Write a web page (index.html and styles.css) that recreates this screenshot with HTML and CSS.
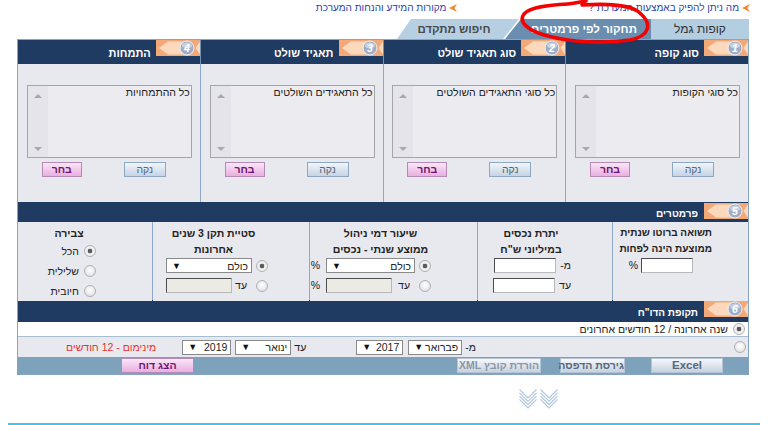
FILE: index.html
```html
<!DOCTYPE html>
<html lang="he" dir="rtl">
<head>
<meta charset="utf-8">
<title>תחקור לפי פרמטרים</title>
<link rel="stylesheet" href="styles.css">
</head>
<body>
<div class="page">
  <div class="toplinks">
    <a class="tl"><svg class="arr" width="8" height="8" viewBox="0 0 8 8"><polygon points="0,4 8,0 5.5,4 8,8" fill="#f08a2c"/></svg>מה ניתן להפיק באמצעות המערכת ?</a>
    <a class="tl tl2"><svg class="arr" width="8" height="8" viewBox="0 0 8 8"><polygon points="0,4 8,0 5.5,4 8,8" fill="#f08a2c"/></svg>מקורות המידע והנחות המערכת</a>
  </div>

  <div class="tabs">
    <div class="tab tab-plain">קופות גמל</div>
    <div class="tab tab-active">תחקור לפי פרמטרים</div>
    <div class="tab tab-adv">חיפוש מתקדם</div>
  </div>

  <div class="frame">
    <div class="hdr4">
      <div class="hcell">
        <svg class="badge" width="44" height="16" viewBox="0 0 44 16"><rect width="44" height="16" fill="#f2a877"/><polygon points="3,8 12,1.5 31,1.5 31,14.5 12,14.5" fill="#fcd9bd"/><polygon points="44,1.5 39.5,8 44,14.5" fill="#fcd9bd"/><circle cx="31" cy="8" r="7" fill="#9fadc6" stroke="#eef2f8" stroke-width="1"/><ellipse cx="31" cy="5.5" rx="5" ry="3" fill="#c9d3e3"/><text x="31" y="11.8" font-size="10.5" font-weight="bold" font-style="italic" font-family="Liberation Sans, sans-serif" fill="#fff" text-anchor="middle">1</text></svg>
        <span class="htxt">סוג קופה</span>
      </div>
      <div class="hcell">
        <svg class="badge" width="44" height="16" viewBox="0 0 44 16"><rect width="44" height="16" fill="#f2a877"/><polygon points="3,8 12,1.5 31,1.5 31,14.5 12,14.5" fill="#fcd9bd"/><polygon points="44,1.5 39.5,8 44,14.5" fill="#fcd9bd"/><circle cx="31" cy="8" r="7" fill="#9fadc6" stroke="#eef2f8" stroke-width="1"/><ellipse cx="31" cy="5.5" rx="5" ry="3" fill="#c9d3e3"/><text x="31" y="11.8" font-size="10.5" font-weight="bold" font-style="italic" font-family="Liberation Sans, sans-serif" fill="#fff" text-anchor="middle">2</text></svg>
        <span class="htxt">סוג תאגיד שולט</span>
      </div>
      <div class="hcell">
        <svg class="badge" width="44" height="16" viewBox="0 0 44 16"><rect width="44" height="16" fill="#f2a877"/><polygon points="3,8 12,1.5 31,1.5 31,14.5 12,14.5" fill="#fcd9bd"/><polygon points="44,1.5 39.5,8 44,14.5" fill="#fcd9bd"/><circle cx="31" cy="8" r="7" fill="#9fadc6" stroke="#eef2f8" stroke-width="1"/><ellipse cx="31" cy="5.5" rx="5" ry="3" fill="#c9d3e3"/><text x="31" y="11.8" font-size="10.5" font-weight="bold" font-style="italic" font-family="Liberation Sans, sans-serif" fill="#fff" text-anchor="middle">3</text></svg>
        <span class="htxt">תאגיד שולט</span>
      </div>
      <div class="hcell">
        <svg class="badge" width="44" height="16" viewBox="0 0 44 16"><rect width="44" height="16" fill="#f2a877"/><polygon points="3,8 12,1.5 31,1.5 31,14.5 12,14.5" fill="#fcd9bd"/><polygon points="44,1.5 39.5,8 44,14.5" fill="#fcd9bd"/><circle cx="31" cy="8" r="7" fill="#9fadc6" stroke="#eef2f8" stroke-width="1"/><ellipse cx="31" cy="5.5" rx="5" ry="3" fill="#c9d3e3"/><text x="31" y="11.8" font-size="10.5" font-weight="bold" font-style="italic" font-family="Liberation Sans, sans-serif" fill="#fff" text-anchor="middle">4</text></svg>
        <span class="htxt">התמחות</span>
      </div>
    </div>

    <div class="panels">
      <div class="panel">
        <div class="listbox"><div class="lb-text">כל סוגי הקופות</div><div class="lb-scroll"><i class="up"></i><i class="down"></i></div></div>
        <div class="btnrow"><button class="btn btn-clear">נקה</button><button class="btn btn-pick">בחר</button></div>
      </div>
      <div class="panel">
        <div class="listbox"><div class="lb-text">כל סוגי התאגידים השולטים</div><div class="lb-scroll"><i class="up"></i><i class="down"></i></div></div>
        <div class="btnrow"><button class="btn btn-clear">נקה</button><button class="btn btn-pick">בחר</button></div>
      </div>
      <div class="panel">
        <div class="listbox"><div class="lb-text">כל התאגידים השולטים</div><div class="lb-scroll"><i class="up"></i><i class="down"></i></div></div>
        <div class="btnrow"><button class="btn btn-clear">נקה</button><button class="btn btn-pick">בחר</button></div>
      </div>
      <div class="panel">
        <div class="listbox"><div class="lb-text">כל ההתמחויות</div><div class="lb-scroll"><i class="up"></i><i class="down"></i></div></div>
        <div class="btnrow"><button class="btn btn-clear">נקה</button><button class="btn btn-pick">בחר</button></div>
      </div>
    </div>

    <div class="sechdr">
      <svg class="badge" width="44" height="16" viewBox="0 0 44 16"><rect width="44" height="16" fill="#f2a877"/><polygon points="3,8 12,1.5 31,1.5 31,14.5 12,14.5" fill="#fcd9bd"/><polygon points="44,1.5 39.5,8 44,14.5" fill="#fcd9bd"/><circle cx="31" cy="8" r="7" fill="#9fadc6" stroke="#eef2f8" stroke-width="1"/><ellipse cx="31" cy="5.5" rx="5" ry="3" fill="#c9d3e3"/><text x="31" y="11.8" font-size="10.5" font-weight="bold" font-style="italic" font-family="Liberation Sans, sans-serif" fill="#fff" text-anchor="middle">5</text></svg>
      <span class="stxt">פרמטרים</span>
    </div>

    <div class="params">
      <div class="pc pc-a">
        <div class="ph">תשואה ברוטו שנתית<br>ממוצעת הינה לפחות</div>
        <div class="frow"><span class="inp w52"></span><span class="lbl">%</span></div>
      </div>
      <div class="pc pc-b">
        <div class="ph">יתרת נכסים<br>במיליוני ש"ח</div>
        <div class="frow"><span class="lbl">מ-</span><span class="inp w62"></span></div>
        <div class="frow r2"><span class="lbl">עד</span><span class="inp w62"></span></div>
      </div>
      <div class="pc pc-c">
        <div class="ph">שיעור דמי ניהול<br>ממוצע שנתי - נכסים</div>
        <div class="frow"><input type="radio" class="rd" name="dmei" checked><span class="sel w89"><span>כולם</span><span class="tri">▼</span></span><span class="lbl pct">%</span></div>
        <div class="frow r2"><input type="radio" class="rd" name="dmei"><span class="box w89"><span class="lbl">עד</span><span class="inp dis w66"></span></span><span class="lbl pct">%</span></div>
      </div>
      <div class="pc pc-d">
        <div class="ph">סטיית תקן 3 שנים<br>אחרונות</div>
        <div class="frow"><input type="radio" class="rd" name="stiya" checked><span class="sel w86"><span>כולם</span><span class="tri">▼</span></span></div>
        <div class="frow r2"><input type="radio" class="rd" name="stiya"><span class="box w86"><span class="lbl">עד</span><span class="inp dis w66"></span></span></div>
      </div>
      <div class="pc pc-e">
        <div class="ph">צבירה</div>
        <label class="rrow"><input type="radio" class="rd" name="tzvira" checked><span>הכל</span></label>
        <label class="rrow"><input type="radio" class="rd" name="tzvira"><span>שלילית</span></label>
        <label class="rrow"><input type="radio" class="rd" name="tzvira"><span>חיובית</span></label>
      </div>
    </div>

    <div class="sechdr tall">
      <svg class="badge" width="44" height="16" viewBox="0 0 44 16"><rect width="44" height="16" fill="#f2a877"/><polygon points="3,8 12,1.5 31,1.5 31,14.5 12,14.5" fill="#fcd9bd"/><polygon points="44,1.5 39.5,8 44,14.5" fill="#fcd9bd"/><circle cx="31" cy="8" r="7" fill="#9fadc6" stroke="#eef2f8" stroke-width="1"/><ellipse cx="31" cy="5.5" rx="5" ry="3" fill="#c9d3e3"/><text x="31" y="11.8" font-size="10.5" font-weight="bold" font-style="italic" font-family="Liberation Sans, sans-serif" fill="#fff" text-anchor="middle">6</text></svg>
      <span class="stxt">תקופת הדו"ח</span>
    </div>

    <div class="lastyear">
      <input type="radio" class="rd" name="period" checked><span>שנה אחרונה / 12 חודשים אחרונים</span>
    </div>

    <div class="daterow">
      <span class="rdcell"><input type="radio" class="rd" name="period"></span>
      <span class="lbl">מ-</span>
      <span class="sel w54 ml5"><span>פברואר</span><span class="tri">▼</span></span>
      <span class="sel w47"><span>2017</span><span class="tri">▼</span></span>
      <span class="lbl until">עד</span>
      <span class="sel w56 ml4"><span>ינואר</span><span class="tri">▼</span></span>
      <span class="sel w49"><span>2019</span><span class="tri">▼</span></span>
      <span class="minimum">מינימום - 12 חודשים</span>
    </div>

    <div class="actions">
      <button class="abtn w72 big">Excel</button>
      <button class="abtn w65 g26">גירסת הדפסה</button>
      <button class="abtn abtn-dis w84 g19">הורדת קובץ XML</button>
      <button class="abtn abtn-pink w73 g263">הצג דוח</button>
    </div>
  </div>

  <div class="chev">
    <svg width="40" height="21" viewBox="0 0 40 21">
      <g fill="none" stroke="#aec3dc" stroke-width="1.1">
        <polyline points="0.5,0.5 9,9 17.5,0.5"/>
        <polyline points="0.5,3.8 9,12.3 17.5,3.8"/>
        <polyline points="0.5,7.1 9,15.6 17.5,7.1"/>
        <polyline points="0.5,10.4 9,18.9 17.5,10.4"/>
        <polyline points="21.5,0.5 30,9 38.5,0.5"/>
        <polyline points="21.5,3.8 30,12.3 38.5,3.8"/>
        <polyline points="21.5,7.1 30,15.6 38.5,7.1"/>
        <polyline points="21.5,10.4 30,18.9 38.5,10.4"/>
      </g>
    </svg>
  </div>
  <div class="cyan"></div>
</div>

<svg class="annot" width="768" height="50" viewBox="0 0 768 50">
  <path d="M 582 5 C 612 3, 634 6, 641 14 C 652 24, 650 36, 630 40 C 604 44, 570 42, 548 36 C 528 31, 518 22, 524 14 C 530 7, 548 5, 568 4 C 575 3.5, 580 2, 586 1" fill="none" stroke="#f50000" stroke-width="3.6" stroke-linecap="round"/>
</svg>
</body>
</html>
```

FILE: styles.css
```css
* { box-sizing: border-box; }

html, body {
  margin: 0;
  padding: 0;
  background: #fff;
}

body {
  font-family: "Liberation Sans", Arial, sans-serif;
  font-size: 10.5px;
  color: #222;
  width: 768px;
  height: 425px;
  overflow: hidden;
  position: relative;
}

.page {
  direction: rtl;
}

/* top links */
.toplinks {
  height: 19px;
  display: flex;
  align-items: flex-start;
  padding-top: 1px;
  padding-right: 18px;
}
.tl {
  display: flex;
  align-items: center;
  gap: 3px;
  color: #2a3fae;
  text-decoration: none;
  line-height: 13px;
  font-size: 10px;
  white-space: nowrap;
}
.tl2 { margin-right: 131px; }
.arr { display: block; }

/* tabs */
.tabs {
  display: flex;
  height: 20px;
  padding-right: 19px;
}
.tab {
  height: 20px;
  display: flex;
  align-items: center;
  justify-content: center;
  font-size: 11.5px;
  white-space: nowrap;
}
.tab-plain {
  width: 98px;
  background: #b3cde1;
  color: #333;
  font-size: 12px;
}
.tab-active {
  width: 146px;
  padding-left: 12px;
  background: #6a8eaf;
  color: #fff;
  font-weight: bold;
  clip-path: polygon(16px 0, 100% 0, 100% 100%, 0 100%);
}
.tab-adv {
  width: 124px;
  margin-right: -16px;
  padding-right: 10px;
  background: #b6cfe2;
  color: #4a4a4a;
  font-weight: bold;
  clip-path: polygon(14px 0, 122px 0, 106px 100%, 0 100%);
}

/* frame */
.frame {
  margin: 0 19px 0 17px;
  width: 732px;
  border: 1px solid #86a5c2;
}

.hdr4 {
  display: grid;
  grid-template-columns: repeat(4, 1fr);
  gap: 1px;
  background: #7192b4;
  height: 24px;
}
.hcell {
  background: #1f3b62;
  display: flex;
  align-items: flex-start;
}
.badge { display: block; flex: none; }
.htxt {
  align-self: center;
  margin-right: 5px;
  color: #fff;
  font-weight: bold;
  font-size: 11px;
  padding-top: 2px;
  white-space: nowrap;
}

.panels {
  display: grid;
  grid-template-columns: repeat(4, 1fr);
  gap: 1px;
  background: #8eaac6;
  height: 138px;
}
.panel {
  background: #e8e8ef;
  padding-top: 21px;
}
.listbox {
  display: flex;
  width: 165px;
  height: 73px;
  margin: 0 8px 0 auto;
  border: 1px solid #a5a5a8;
  background: #ebebf0;
}
.lb-text {
  flex: 1;
  padding: 0 1px 0 0;
  line-height: 12px;
  font-size: 10.5px;
  color: #222;
  white-space: nowrap;
}
.lb-scroll {
  width: 20px;
  background: #e4e4ea;
  display: flex;
  flex-direction: column;
  justify-content: space-between;
  align-items: center;
  padding: 8px 0 6px;
}
.up, .down {
  display: block;
  width: 0;
  height: 0;
  border-left: 4px solid transparent;
  border-right: 4px solid transparent;
}
.up { border-bottom: 4px solid #a8a8ae; }
.down { border-top: 4px solid #a8a8ae; }

.btnrow {
  display: flex;
  gap: 42px;
  padding-right: 34px;
  margin-top: 4px;
}
.btn {
  height: 15px;
  padding: 0;
  font-family: "Liberation Sans", Arial, sans-serif;
  font-size: 10.5px;
  line-height: 13px;
}
.btn-clear {
  width: 42px;
  border: 1px solid #8ea8c2;
  background: linear-gradient(#f1f5fa, #c5d4e4);
  color: #56667a;
}
.btn-pick {
  width: 40px;
  border: 1px solid #b48bb4;
  background: linear-gradient(#fbe6f7, #e8aee1);
  color: #6e1670;
  font-weight: bold;
}

/* section headers */
.sechdr {
  height: 20px;
  background: #1f3b62;
  display: flex;
  align-items: flex-start;
  padding-top: 1px;
}
.sechdr.tall { height: 22px; }
.stxt {
  align-self: center;
  margin-right: 6px;
  color: #fff;
  font-weight: bold;
  font-size: 10px;
  padding-top: 1px;
  white-space: nowrap;
}

/* parameters */
.params {
  display: grid;
  grid-template-columns: 135px 134px 167px 156px 1fr;
  gap: 1px;
  background: #8eaac6;
  height: 78px;
}
.pc {
  background: #e8e8ef;
  padding-top: 3px;
}
.ph {
  font-weight: bold;
  line-height: 16px;
  font-size: 10.5px;
  color: #222;
  white-space: nowrap;
}
.frow {
  display: flex;
  align-items: center;
  height: 15px;
  margin-top: 1px;
}
.frow.r2 { margin-top: 5px; }
.lbl { line-height: 13px; white-space: nowrap; }

.pc-a .ph { text-align: right; padding-right: 36px; font-size: 10px; }
.pc-a .frow { padding-right: 55px; gap: 3px; }

.pc-b .ph { text-align: center; padding-right: 28px; }
.pc-b .frow { padding-right: 41px; gap: 4px; }

.pc-c .ph { text-align: center; padding-right: 26px; }
.pc-c .frow { padding-right: 46px; gap: 4px; }
.pc-c .pct { margin-right: 2px; }

.pc-d .ph { text-align: center; padding-right: 35px; }
.pc-d .frow { padding-right: 41px; gap: 4px; }

.pc-e .ph { text-align: center; padding-right: 32px; }
.rrow {
  display: flex;
  align-items: center;
  gap: 5px;
  height: 20px;
  padding-right: 56px;
}

.rd {
  appearance: none;
  -webkit-appearance: none;
  width: 12px;
  height: 12px;
  margin: 0;
  flex: none;
  border: 1px solid #b1b1b4;
  border-radius: 50%;
  background: radial-gradient(circle at 50% 40%, #ffffff 0, #e9e9ec 60%, #d8d8dc 100%);
}
.rd:checked {
  background: radial-gradient(circle, #5a5a5a 0, #5a5a5a 2px, #e5e5e8 2.6px, #f4f4f6 4px, #dadadd 100%);
}

.inp {
  display: block;
  height: 15px;
  background: #fff;
  border: 1px solid;
  border-color: #4d4d4d #b9b9b9 #b9b9b9 #4d4d4d;
  flex: none;
}
.inp.dis { background: #ecebe3; }
.w52 { width: 52px; }
.w62 { width: 62px; }
.w66 { width: 66px; }

.sel {
  display: flex;
  justify-content: space-between;
  align-items: center;
  height: 15px;
  background: #fff;
  border: 1px solid #8a8a8a;
  padding: 0 3px 0 5px;
  font-size: 10.5px;
  flex: none;
  white-space: nowrap;
}
.tri { font-size: 9px; color: #111; }
.box {
  display: flex;
  justify-content: space-between;
  align-items: center;
  padding-right: 5px;
  flex: none;
}
.w89 { width: 89px; }
.w86 { width: 86px; }
.w54 { width: 54px; }
.w47 { width: 47px; }
.w56 { width: 56px; }
.w49 { width: 49px; }

/* period */
.lastyear {
  height: 15px;
  background: #fff;
  border-bottom: 1px solid #a9bdd1;
  display: flex;
  align-items: center;
  gap: 5px;
  padding-right: 3px;
  font-size: 10.5px;
  white-space: nowrap;
}
.daterow {
  height: 20px;
  background: #e8e8ef;
  display: flex;
  align-items: center;
}
.rdcell {
  width: 272px;
  flex: none;
  display: flex;
  padding-right: 2px;
}
.ml5 { margin-right: 3px; margin-left: 5px; }
.ml4 { margin-right: 3px; margin-left: 4px; }
.until { margin-right: 50px; }
.minimum {
  color: #e8302e;
  margin-right: 26px;
  white-space: nowrap;
}

.actions {
  height: 17px;
  background: #7ea2bc;
  display: flex;
  align-items: center;
  padding-right: 25px;
}
.abtn {
  height: 15px;
  padding: 0;
  flex: none;
  border: 1px solid #b5c5d6;
  background: linear-gradient(#f6f8fb, #c6d2df);
  color: #56677e;
  font-family: "Liberation Sans", Arial, sans-serif;
  font-size: 10.5px;
  font-weight: bold;
  line-height: 13px;
  white-space: nowrap;
  overflow: visible;
}
.abtn.big { font-size: 11.5px; }
.abtn-dis { color: #8b97a6; }
.abtn-pink {
  border-color: #b48bb4;
  background: linear-gradient(#fbe6f7, #e8aee1);
  color: #6e1670;
}
.w72 { width: 72px; }
.w65 { width: 65px; }
.w84 { width: 84px; }
.w73 { width: 73px; }
.g26 { margin-right: 26px; }
.g19 { margin-right: 19px; }
.g263 { margin-right: 263px; }

/* bottom */
.chev {
  direction: ltr;
  padding-left: 519px;
  margin-top: 14px;
  height: 21px;
}
.chev svg { display: block; }
.cyan {
  margin: 13px 8px 0;
  height: 2px;
  background: #3ec6f0;
}

.annot {
  position: absolute;
  top: 0;
  left: 0;
  pointer-events: none;
}
```
